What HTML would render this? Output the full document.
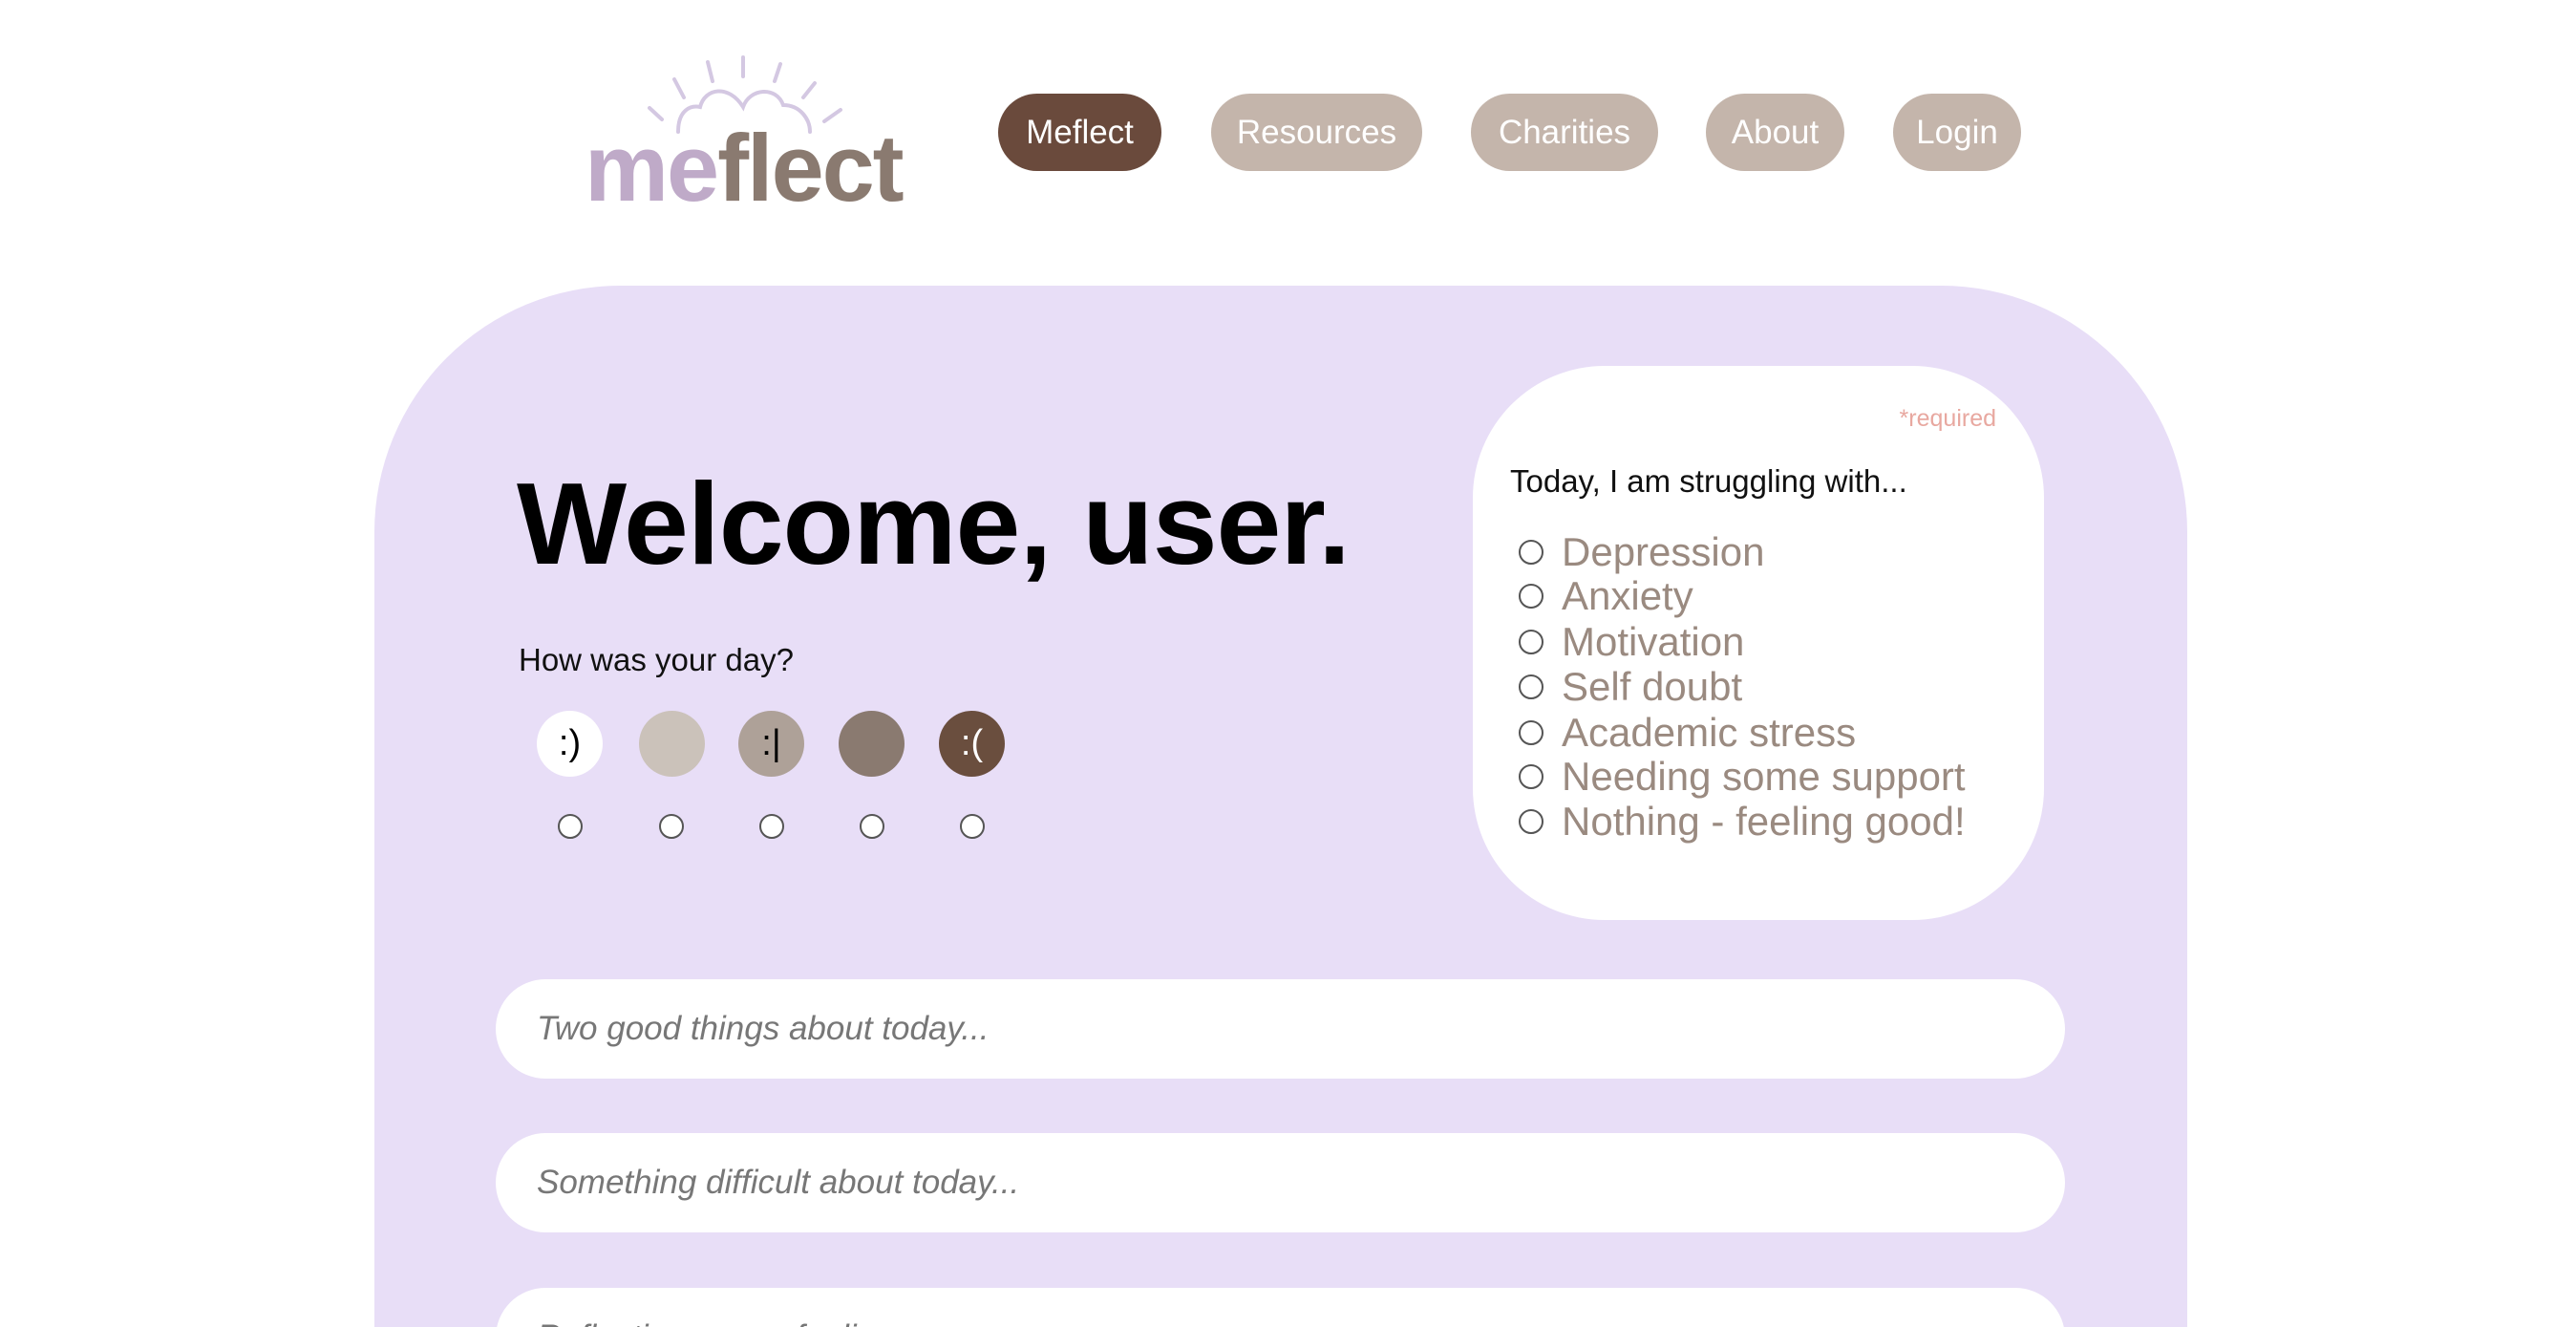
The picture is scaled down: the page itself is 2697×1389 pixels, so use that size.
<!DOCTYPE html>
<html><head><meta charset="utf-8"><style>
*{margin:0;padding:0;box-sizing:border-box}
html,body{width:2697px;height:1389px;overflow:hidden}
body{background:#fff;font-family:"Liberation Sans",sans-serif;position:relative}
.abs{position:absolute}
.logo{left:612px;top:126px;font-size:99px;font-weight:bold;letter-spacing:-2px;line-height:1}
.pill{position:absolute;top:98px;height:81px;border-radius:41px;background:#c4b5ab;color:#fff;font-size:35px;display:flex;align-items:center;justify-content:center}
.panel{left:392px;top:299px;width:1898px;height:1090px;background:#e8def7;border-radius:258px 258px 0 0}
.circ{position:absolute;top:744px;width:69px;height:69px;border-radius:50%;display:flex;align-items:center;justify-content:center;font-size:38px}
.rad{position:absolute;width:26px;height:26px;border-radius:50%;border:2px solid #555;background:#fff}
.box{left:1542px;top:383px;width:598px;height:580px;background:#fff;border-radius:138px}
.opt{position:absolute;left:1635px;font-size:42px;color:#9a8a80;line-height:1}
.inp{position:absolute;left:519px;width:1643px;height:104px;background:#fff;border-radius:52px;font-size:35px;font-style:italic;color:#777;padding-left:43px;display:flex;align-items:center}
</style></head><body>
<svg class="abs" style="left:613px;top:50px" width="300" height="100" viewBox="0 0 300 100">
<g stroke="#d4c8e2" stroke-width="4" fill="none" stroke-linecap="round">
<path d="M67 63 L80 75"/><path d="M93 33 L103 52"/><path d="M128 15 L133 35"/><path d="M165 10 L165 30"/><path d="M204 17 L198 35"/><path d="M240 37 L228 52"/><path d="M267 65 L250 77"/>
<path d="M97 88 C97 65 110 60 120 62 C125 42 150 38 165 62 C172 42 200 40 207 60 C225 60 235 75 235 88"/>
</g></svg>
<div class="abs logo"><span style="color:#bfaac8">me</span><span style="color:#8a7a70">flect</span></div>
<div class="pill" style="left:1045px;width:171px;background:#6a4a3c">Meflect</div>
<div class="pill" style="left:1268px;width:221px">Resources</div>
<div class="pill" style="left:1540px;width:196px">Charities</div>
<div class="pill" style="left:1786px;width:145px">About</div>
<div class="pill" style="left:1982px;width:134px">Login</div>
<div class="abs panel"></div>
<div class="abs" style="left:541px;top:478px;font-size:122px;font-weight:bold;color:#000;letter-spacing:-1px">Welcome, user.</div>
<div class="abs" style="left:543px;top:672px;font-size:33px;color:#111">How was your day?</div>
<div class="circ" style="left:562px;background:#fff;color:#000">:)</div>
<div class="circ" style="left:669px;background:#cbc2ba"></div>
<div class="circ" style="left:773px;background:#aea198;color:#000">:|</div>
<div class="circ" style="left:878px;background:#8a7a70"></div>
<div class="circ" style="left:983px;background:#6a4e3e;color:#fff">:(</div>
<div class="rad" style="left:584px;top:852px"></div>
<div class="rad" style="left:690px;top:852px"></div>
<div class="rad" style="left:795px;top:852px"></div>
<div class="rad" style="left:900px;top:852px"></div>
<div class="rad" style="left:1005px;top:852px"></div>
<div class="abs box"></div>
<div class="abs" style="left:1967px;top:424px;width:123px;text-align:right;font-size:25px;color:#e8a8a0">*required</div>
<div class="abs" style="left:1581px;top:485px;font-size:33px;color:#111">Today, I am struggling with...</div>
<div class="rad" style="left:1590px;top:565px"></div><div class="opt" style="top:557px">Depression</div>
<div class="rad" style="left:1590px;top:611px"></div><div class="opt" style="top:603px">Anxiety</div>
<div class="rad" style="left:1590px;top:659px"></div><div class="opt" style="top:651px">Motivation</div>
<div class="rad" style="left:1590px;top:706px"></div><div class="opt" style="top:698px">Self doubt</div>
<div class="rad" style="left:1590px;top:754px"></div><div class="opt" style="top:746px">Academic stress</div>
<div class="rad" style="left:1590px;top:800px"></div><div class="opt" style="top:792px">Needing some support</div>
<div class="rad" style="left:1590px;top:847px"></div><div class="opt" style="top:839px">Nothing - feeling good!</div>
<div class="inp" style="top:1025px">Two good things about today...</div>
<div class="inp" style="top:1186px">Something difficult about today...</div>
<div class="inp" style="top:1348px">Reflection on my feelings...</div>
</body></html>
